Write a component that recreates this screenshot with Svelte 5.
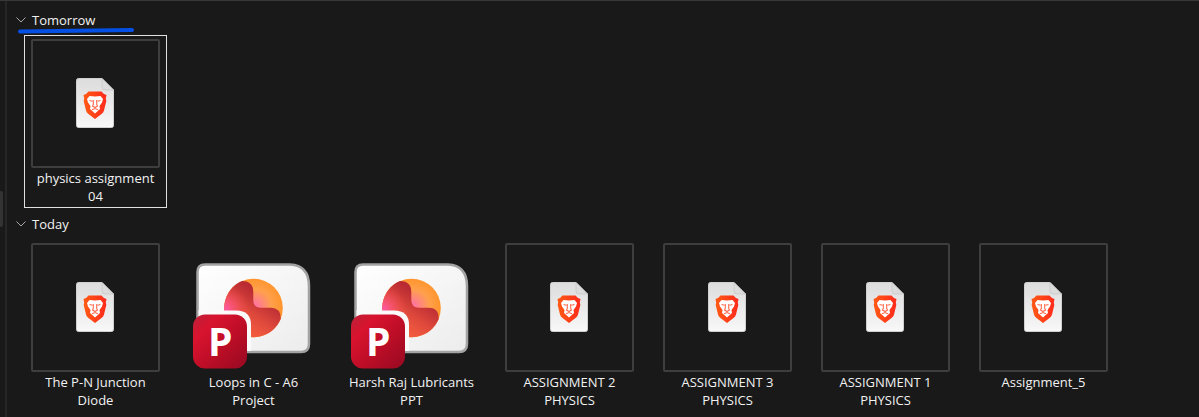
<script lang="ts">
    type FileItem = { name: string; kind: 'pdf' | 'ppt'; selected?: boolean };
    type Group = { title: string; open: boolean; marked?: boolean; files: FileItem[] };

    let groups: Group[] = $state([
        {
            title: 'Tomorrow',
            open: true,
            marked: true,
            files: [{ name: 'physics assignment 04', kind: 'pdf', selected: true }]
        },
        {
            title: 'Today',
            open: true,
            files: [
                { name: 'The P-N Junction Diode', kind: 'pdf' },
                { name: 'Loops in C - A6 Project', kind: 'ppt' },
                { name: 'Harsh Raj Lubricants PPT', kind: 'ppt' },
                { name: 'ASSIGNMENT 2 PHYSICS', kind: 'pdf' },
                { name: 'ASSIGNMENT 3 PHYSICS', kind: 'pdf' },
                { name: 'ASSIGNMENT 1 PHYSICS', kind: 'pdf' },
                { name: 'Assignment_5', kind: 'pdf' }
            ]
        }
    ]);

    function select(file: FileItem) {
        for (const group of groups) {
            for (const f of group.files) f.selected = false;
        }
        file.selected = true;
    }
</script>

{#snippet pdfIcon()}
    <svg class="page" viewBox="0 0 38 50" aria-hidden="true">
        <path d="M2.500 .5H26L37.500 12V47.500Q37.500 49.500 35.500 49.500H2.500Q.5 49.500 .5 47.500V2.500Q.5 .5 2.500 .5Z" fill="url(#paper)" stroke="#d0d0d0" />
        <path d="M26 .5L37.500 12H29Q26 12 26 9Z" fill="#dcdcdc" stroke="#c6c6c6" stroke-width=".7" />
        <path d="M12.500 13.500H25.500L28 16L30.500 17L29.800 20.500L30.300 23L28 32.500Q27.500 34.500 25.500 36L19 41L12.500 36Q10.500 34.500 10 32.500L7.700 23L8.200 20.500L7.500 17L10 16Z" fill="url(#brave)" />
        <path d="M13.500 18L19 18.500L24.500 18L27 21L26 24.500L23.500 28L24 31L19 35.500L14 31L14.500 28L12 24.500L11 21Z" fill="#fff" />
        <path d="M13.500 22.500L16.500 23.200M24.500 22.500L21.500 23.200M17.300 22V26.500L16.500 28L19 29.500L21.500 28L20.700 26.500V22M16 31.800L19 30.500L22 31.800" fill="none" stroke="#ff6a4e" stroke-width="1.100" />
    </svg>
{/snippet}

{#snippet pptIcon()}
    <svg class="slides" viewBox="0 0 129 129" aria-hidden="true">
        <path d="M16 21.500H101Q120 22.500 120 43V101Q120 109 112 109H16Q8.500 109 8.500 101V29Q8.500 21.500 16 21.500Z" fill="url(#slide)" stroke="#a3a3a3" stroke-width="2.500" />
        <circle cx="64.500" cy="65" r="29.300" fill="url(#orange)" />
        <path d="M53 38C61 38 64.300 42 64.300 49V57Q64.300 64.700 72 64.700H82Q92 65 91.700 76A29.300 29.300 0 1 1 53 38Z" fill="url(#coral)" />
        <path d="M53 38C61 38 64.300 42 64.300 49V57Q64.300 64.700 72 64.700H82Q92 65 91.700 76A29.300 29.300 0 1 1 53 38Z" fill="url(#pink)" />
        <path d="M9.500 67.500H47Q62 67.500 62 82V108H16Q9.500 108 9.500 101Z" fill="#fafafa" />
        <rect x="4" y="71.500" width="54" height="54" rx="12" fill="url(#badge)" />
        <text x="19" y="113">P</text>
    </svg>
{/snippet}

<svg class="defs" aria-hidden="true">
    <defs>
        <linearGradient id="paper" x1="0" y1="0" x2="0" y2="1">
            <stop offset="0" stop-color="#dcdcdc" />
            <stop offset="1" stop-color="#f8f8f8" />
        </linearGradient>
        <linearGradient id="brave">
            <stop offset="0" stop-color="#ff5a14" />
            <stop offset="1" stop-color="#ff2a1c" />
        </linearGradient>
        <linearGradient id="slide" x1="0" y1="0" x2="1" y2="1">
            <stop offset="0" stop-color="#ffffff" />
            <stop offset="1" stop-color="#ececec" />
        </linearGradient>
        <radialGradient id="orange" gradientUnits="userSpaceOnUse" cx="66" cy="63" r="33">
            <stop offset="0" stop-color="#ff70a8" />
            <stop offset=".5" stop-color="#ffa04c" />
            <stop offset="1" stop-color="#ff8f1c" />
        </radialGradient>
        <linearGradient id="coral" gradientUnits="userSpaceOnUse" x1="48" y1="88" x2="72" y2="52">
            <stop offset="0" stop-color="#f9603f" />
            <stop offset=".5" stop-color="#e04a3c" />
            <stop offset="1" stop-color="#b92a33" />
        </linearGradient>
        <radialGradient id="pink" gradientUnits="userSpaceOnUse" cx="36" cy="66" r="24">
            <stop offset="0" stop-color="#ff58a8" />
            <stop offset="1" stop-color="#ff5050" stop-opacity="0" />
        </radialGradient>
        <linearGradient id="badge" x1="0" y1="0" x2="1" y2="1">
            <stop offset="0" stop-color="#bd2138" />
            <stop offset=".25" stop-color="#d8132f" />
            <stop offset=".6" stop-color="#bb0d26" />
            <stop offset="1" stop-color="#960a22" />
        </linearGradient>
    </defs>
</svg>

<div class="window">
    <div class="rail"><span class="thumb"></span></div>
    <main>
        {#each groups as group}
            <section>
                <button class="heading" aria-expanded={group.open} onclick={() => (group.open = !group.open)}>
                    <svg class="chevron" class:closed={!group.open} viewBox="0 0 10 6" aria-hidden="true">
                        <path d="M.5 .5L5 5L9.500 .5" />
                    </svg>
                    <span>{group.title}</span>
                </button>
                {#if group.marked}
                    <svg class="marker" viewBox="0 0 118 6" aria-hidden="true">
                        <path d="M3 3.500Q50 3 115 2" />
                    </svg>
                {/if}
                {#if group.open}
                    <div class="files">
                        {#each group.files as file}
                            <button class="file" class:selected={file.selected} onclick={() => select(file)}>
                                {#if file.kind === 'pdf'}
                                    <span class="preview framed">{@render pdfIcon()}</span>
                                {:else}
                                    <span class="preview">{@render pptIcon()}</span>
                                {/if}
                                <span class="name">{file.name}</span>
                            </button>
                        {/each}
                    </div>
                {/if}
            </section>
        {/each}
    </main>
</div>

<style>
    :global(body) {
        margin: 0;
        background: #191919;
    }

    .window {
        display: flex;
        box-sizing: border-box;
        min-height: 100vh;
        border-top: 1px solid #383838;
        background: #191919;
        color: #f2f2f2;
        font-family: "Open Sans", "Noto Sans", sans-serif;
        font-size: 13px;
        line-height: 18px;
    }

    .defs {
        position: absolute;
        width: 0;
        height: 0;
    }

    .rail {
        display: flex;
        align-items: center;
        width: 5px;
        border-right: 2px solid #262626;
    }

    .thumb {
        width: 3px;
        height: 36px;
        border-radius: 0 2px 2px 0;
        background: #333;
    }

    main {
        flex: 1;
        padding: 3px 9px 0;
    }

    section {
        position: relative;
    }

    button {
        border: 0;
        background: none;
        color: inherit;
        font: inherit;
        cursor: pointer;
    }

    .heading {
        display: flex;
        align-items: center;
        gap: 6px;
        height: 31px;
        padding: 0;
    }

    .chevron {
        width: 10px;
        height: 6px;
        fill: none;
        stroke: #a8a8a8;
    }

    .chevron.closed {
        transform: rotate(-90deg);
    }

    /* pen stroke under the heading */
    .marker {
        position: absolute;
        top: 24px;
        left: 1px;
        width: 118px;
        height: 6px;
        fill: none;
        stroke: #0450e4;
        stroke-width: 4;
        stroke-linecap: round;
    }

    .files {
        display: flex;
        flex-wrap: wrap;
        gap: 15px;
        padding-left: 8px;
    }

    .file {
        display: flex;
        flex-direction: column;
        align-items: center;
        box-sizing: border-box;
        width: 143px;
        min-height: 173px;
        padding: 3px 5px 2px;
        border: 1px solid transparent;
    }

    .file.selected {
        border-color: #e0e0e0;
    }

    .preview {
        display: flex;
        align-items: center;
        justify-content: center;
        box-sizing: border-box;
        width: 129px;
        height: 129px;
    }

    .framed {
        padding: 0 2px 2px 0;
        border: 2px solid #3e3e3e;
        border-radius: 2px;
    }

    .page {
        width: 38px;
        height: 50px;
    }

    .slides {
        width: 129px;
        height: 129px;
    }

    .slides text {
        fill: #fff;
        font-size: 39px;
        font-weight: 700;
    }

    .name {
        max-width: 128px;
        margin-top: 1px;
        text-align: center;
    }
</style>
